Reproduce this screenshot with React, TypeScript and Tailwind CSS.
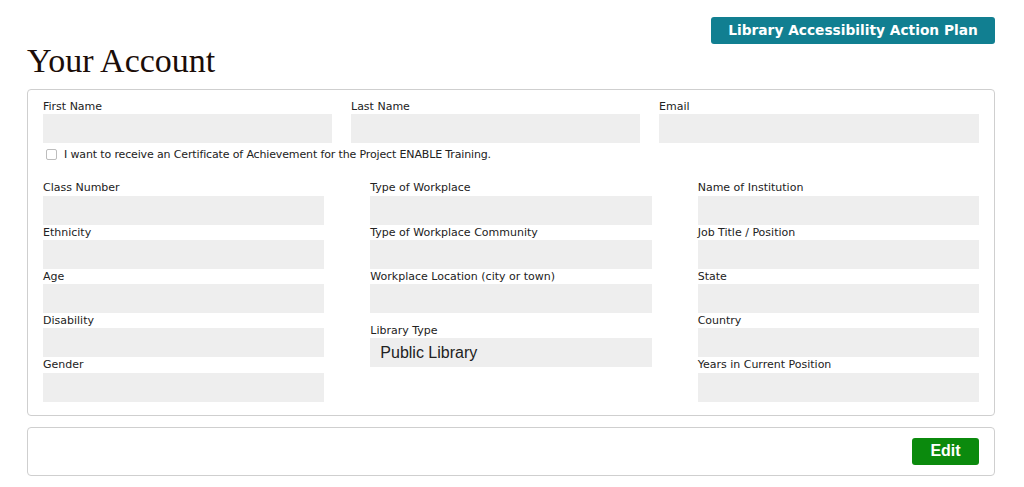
import React from 'react'

const label = "block text-[11px] leading-[15.25px] text-[#222]"
const field = "h-[29px] bg-[#eeeeee]"

function Field({ name, value, extra = '' }: { name: string; value?: string; extra?: string }) {
  return (
    <div className={extra}>
      <span className={label}>{name}</span>
      <div className={`${field} flex items-center px-[10px] text-[16px] text-[#222] [font-family:'Liberation_Sans',Arial,sans-serif]`}>
        {value}
      </div>
    </div>
  )
}

export default function App() {
  return (
    <div className="min-h-[487px] bg-white pl-[27px] pr-[29px] [font-family:'DejaVu_Sans',Verdana,sans-serif]">
      <div className="flex justify-end pt-[17px]">
        <a className="flex h-[27px] w-[284px] items-center justify-center rounded-[3px] bg-[#117f91] text-[13.75px] font-bold text-white">
          Library Accessibility Action Plan
        </a>
      </div>
      <h1 className="-mt-[3px] text-[34px] leading-[40px] text-[#1b0d08] [font-family:'Liberation_Serif','Times_New_Roman',serif]">
        Your Account
      </h1>

      <div className="mt-[8px] rounded-[4px] border border-[#cfcfcf] px-[15px] pb-[13px] pt-[9px]">
        <div className="grid grid-cols-[289px_289px_1fr] gap-x-[19px]">
          <Field name="First Name" />
          <Field name="Last Name" />
          <Field name="Email" />
        </div>
        <label className="mt-[5px] flex items-center gap-[7px] pl-[3px] text-[11px] leading-[13px] tracking-[-0.14px] text-[#222]">
          <span className="h-[11px] w-[11px] rounded-[2px] border border-[#bdbdbd] bg-white" />
          I want to receive an Certificate of Achievement for the Project ENABLE Training.
        </label>

        <div className="mt-[19px] grid grid-cols-3 gap-x-[46px]">
          <div className="flex flex-col">
            <Field name="Class Number" />
            <Field name="Ethnicity" />
            <Field name="Age" />
            <Field name="Disability" />
            <Field name="Gender" />
          </div>
          <div className="flex flex-col">
            <Field name="Type of Workplace" />
            <Field name="Type of Workplace Community" />
            <Field name="Workplace Location (city or town)" />
            <Field name="Library Type" value="Public Library" extra="mt-[10px]" />
          </div>
          <div className="flex flex-col">
            <Field name="Name of Institution" />
            <Field name="Job Title / Position" />
            <Field name="State" />
            <Field name="Country" />
            <Field name="Years in Current Position" />
          </div>
        </div>
      </div>

      <div className="mt-[11px] flex h-[49px] items-center justify-end rounded-[4px] border border-[#cfcfcf] px-[15px]">
        <button className="h-[27px] w-[67px] rounded-[3px] bg-[#0b8a0d] text-[16px] font-bold text-white [font-family:'Liberation_Sans',Arial,sans-serif]">
          Edit
        </button>
      </div>
    </div>
  )
}
